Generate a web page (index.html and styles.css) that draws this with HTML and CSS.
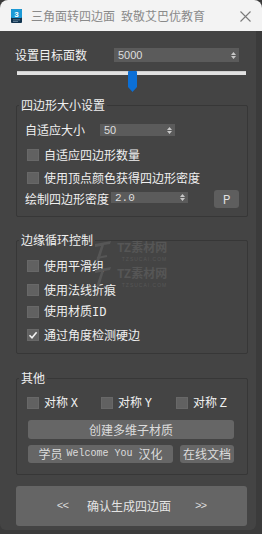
FILE: index.html
```html
<!DOCTYPE html>
<html lang="zh">
<head>
<meta charset="utf-8">
<title>三角面转四边面</title>
<link rel="stylesheet" href="styles.css">
</head>
<body>
<div class="window">
  <div class="titlebar">
    <svg class="app-icon" width="11" height="14" viewBox="0 0 11 14">
      <rect x="0" y="0" width="11" height="14" rx="1" fill="#12344f"/>
      <rect x="0" y="0" width="11" height="9" rx="1" fill="#1c9ad6"/>
      <rect x="2" y="10.5" width="7" height="0.8" fill="#6d8ba3"/>
      <rect x="2" y="12" width="5" height="0.8" fill="#6d8ba3"/>
      <text x="5.5" y="7.6" text-anchor="middle" font-family="Liberation Sans, sans-serif" font-weight="bold" font-size="8" fill="#ffffff">3</text>
    </svg>
    <span class="title">三角面转四边面<span class="title-gap"></span>致敬艾巴优教育</span>
    <svg class="close" width="11" height="11" viewBox="0 0 11 11">
      <path d="M0.5 0.5 L10.5 10.5 M10.5 0.5 L0.5 10.5" stroke="#7a7a7a" stroke-width="1.1" fill="none"/>
    </svg>
  </div>
  <div class="frame">
    <div class="main">
      <div class="row target">
        <span class="label target-label">设置目标面数</span>
        <div class="spinner spin-target"><span class="spin-val sans">5000</span><svg class="arrows" width="5" height="9" viewBox="0 0 5 9"><path d="M0 4 L2.5 1 L5 4 Z M0 5 L2.5 8 L5 5 Z" fill="#c8c8c8"/></svg></div>
      </div>
      <div class="slider">
        <div class="track"></div>
        <svg class="thumb" width="9" height="21" viewBox="0 0 9 21"><path d="M1 0 H8 A1 1 0 0 1 9 1 V16 L4.5 21 L0 16 V1 A1 1 0 0 1 1 0 Z" fill="#0b6fd6"/></svg>
      </div>

      <fieldset class="group g1">
        <legend>四边形大小设置</legend>
        <div class="row r-size">
          <span class="label size-label">自适应大小</span>
          <div class="spinner spin-size"><span class="spin-val sans">50</span><svg class="arrows" width="5" height="9" viewBox="0 0 5 9"><path d="M0 4 L2.5 1 L5 4 Z M0 5 L2.5 8 L5 5 Z" fill="#c8c8c8"/></svg></div>
        </div>
        <div class="check c1"><span class="box"></span><span class="label">自适应四边形数量</span></div>
        <div class="check c2"><span class="box"></span><span class="label">使用顶点颜色获得四边形密度</span></div>
        <div class="row r-density">
          <span class="label">绘制四边形密度</span>
          <div class="spinner spin-density"><span class="spin-val mono val-density">2.0</span><svg class="arrows" width="5" height="9" viewBox="0 0 5 9"><path d="M0 4 L2.5 1 L5 4 Z M0 5 L2.5 8 L5 5 Z" fill="#c8c8c8"/></svg></div>
          <button class="btn btn-p mono">P</button>
        </div>
      </fieldset>

      <fieldset class="group g2">
        <legend>边缘循环控制</legend>
        <div class="check e1"><span class="box"></span><span class="label">使用平滑组</span></div>
        <div class="check e2"><span class="box"></span><span class="label">使用法线折痕</span></div>
        <div class="check e3"><span class="box"></span><span class="label">使用材质<span class="mono big">ID</span></span></div>
        <div class="check e4"><span class="box checked"><svg width="12" height="12" viewBox="0 0 12 12"><path d="M2.5 6.2 L5 8.7 L9.6 3.2" stroke="#f2f2f2" stroke-width="1.6" fill="none"/></svg></span><span class="label">通过角度检测硬边</span></div>
      </fieldset>

      <fieldset class="group g3">
        <legend>其他</legend>
        <div class="sym-row">
          <div class="check"><span class="box"></span><span class="label">对称 <span class="mono big">X</span></span></div>
          <div class="check"><span class="box"></span><span class="label">对称 <span class="mono big">Y</span></span></div>
          <div class="check"><span class="box"></span><span class="label">对称 <span class="mono big">Z</span></span></div>
        </div>
        <button class="btn btn-wide">创建多维子材质</button>
        <div class="btn-row">
          <button class="btn btn-welcome">学员 <span class="mono">Welcome You</span> 汉化</button>
          <button class="btn btn-doc">在线文档</button>
        </div>
      </fieldset>

      <button class="btn go"><span class="chev mono">&lt;&lt;</span><span class="go-text">确认生成四边面</span><span class="chev mono">&gt;&gt;</span></button>

      <div class="watermark wm1">
        <svg class="wm-logo" width="20" height="22" viewBox="0 0 20 22"><path d="M2 4 L18 1 L17 4 L11 5 L6 21 L3 21 L8 6 L2 7 Z" fill="#565656"/><path d="M4 18 L14 16" stroke="#565656" stroke-width="2"/></svg>
        <div class="wm-text"><span class="wm-big">TZ素材网</span><span class="wm-small">TZSUCAI.COM</span></div>
      </div>
      <div class="watermark wm2">
        <svg class="wm-logo" width="20" height="22" viewBox="0 0 20 22"><path d="M2 4 L18 1 L17 4 L11 5 L6 21 L3 21 L8 6 L2 7 Z" fill="#565656"/></svg>
        <div class="wm-text"><span class="wm-big">TZ素材网</span><span class="wm-small">TZSUCAI.COM</span></div>
      </div>
    </div>
  </div>
</div>
</body>
</html>
```

FILE: styles.css
```css
html, body {
  margin: 0;
  padding: 0;
}
body {
  width: 262px;
  height: 534px;
  overflow: hidden;
  background: #3b3b3b;
  font-family: "Noto Sans CJK SC", "Liberation Sans", sans-serif;
  font-size: 12px;
  color: #efefef;
}
.window {
  width: 262px;
  height: 534px;
  display: flex;
  flex-direction: column;
}
.titlebar {
  height: 31px;
  flex: none;
  background: #f3f3f3;
  border-radius: 8px 8px 0 0;
  display: flex;
  align-items: center;
  padding-left: 11px;
}
.app-icon {
  display: block;
  margin-top: 1px;
}
.title {
  margin-left: 9px;
  color: #8a8a8a;
  font-size: 12px;
  line-height: 14px;
  white-space: nowrap;
  display: flex;
}
.title-gap {
  display: inline-block;
  width: 6px;
}
.close {
  display: block;
  margin-left: auto;
  margin-right: 11px;
  margin-top: 1px;
}
.frame {
  flex: 1;
  display: flex;
  background: #3b3b3b;
}
.main {
  position: relative;
  width: 256px;
  height: 499px;
  box-sizing: border-box;
  background: #444444;
  border-radius: 0 0 6px 6px;
  padding-left: 16px;
  padding-top: 17px;
}
.label {
  line-height: 14px;
  white-space: nowrap;
  color: #f0f0f0;
}
.mono {
  font-family: "Liberation Mono", monospace;
  font-size: 10px;
}
.mono.big {
  font-size: 12px;
}
.sans {
  font-family: "Liberation Sans", sans-serif;
  font-size: 11px;
}
.row {
  display: flex;
  align-items: center;
}
.target {
  height: 14px;
}
.target-label {
  width: 99px;
  margin-left: -1px;
}
.spinner {
  box-sizing: border-box;
  background: #5b5b5b;
  display: flex;
  align-items: center;
  padding: 0 3px 0 4px;
  color: #dedede;
}
.spin-val {
  flex: 1;
  line-height: 12px;
}
.val-density {
  font-size: 11px;
}
.arrows {
  display: block;
}
.spin-target {
  width: 125px;
  height: 14px;
}
.slider {
  position: relative;
  width: 229px;
  height: 21px;
  margin-left: 1px;
  margin-top: 6px;
}
.track {
  margin-top: 9px;
  height: 4px;
  background: #e2e2e2;
  border-top: 1px solid #cfcfcf;
  box-sizing: border-box;
}
.thumb {
  position: absolute;
  left: 111px;
  top: 0;
  display: block;
}
.group {
  margin: 0;
  padding: 0;
  width: 232px;
  box-sizing: border-box;
  border: 1px solid #373737;
  border-radius: 2px;
  min-inline-size: 0;
}
.group legend {
  margin-left: 2px;
  padding: 0 2px;
  line-height: 14px;
  font-size: 12px;
  color: #f0f0f0;
}
.g1 {
  margin-top: 6px;
  padding-bottom: 8px;
}
.g2 {
  margin-top: 16px;
  padding-bottom: 12px;
}
.g3 {
  margin-top: 17px;
  padding-bottom: 11px;
}
.r-size {
  height: 12px;
  margin-top: 12px;
  margin-left: 8px;
}
.size-label {
  width: 75px;
}
.spin-size {
  width: 75px;
  height: 12px;
}
.check {
  display: flex;
  align-items: center;
  height: 12px;
  gap: 5px;
}
.g1 .check, .g2 .check {
  margin-left: 10px;
}
.box {
  width: 12px;
  height: 12px;
  flex: none;
  box-sizing: border-box;
  background: #616161;
  border: 1px solid #686868;
  display: block;
  position: relative;
}
.box svg {
  position: absolute;
  left: -1px;
  top: -1px;
}
.c1 { margin-top: 13px; }
.c2 { margin-top: 11px; }
.r-density {
  height: 18px;
  margin-top: 6px;
  margin-left: 8px;
}
.spin-density {
  width: 77px;
  height: 11px;
  margin-left: 2px;
  margin-top: -3px;
}
.btn {
  font-family: "Noto Sans CJK SC", "Liberation Sans", sans-serif;
  font-size: 12px;
  color: #dcdcdc;
  background: #666666;
  border: none;
  border-radius: 3px;
  padding: 0;
  margin: 0;
  line-height: 14px;
  display: flex;
  align-items: center;
  justify-content: center;
  white-space: nowrap;
}
.btn-p {
  width: 25px;
  height: 18px;
  margin-left: 26px;
  font-size: 12px;
  color: #e0e0e0;
  background: #5e5e5e;
}
.e1 { margin-top: 13px; }
.e2 { margin-top: 12px; }
.e3 { margin-top: 10px; }
.e4 { margin-top: 11px; }
.sym-row {
  display: grid;
  grid-template-columns: 74px 75px auto;
  margin-top: 12px;
  margin-left: 10px;
}
.btn-wide {
  width: 206px;
  height: 19px;
  margin-top: 11px;
  margin-left: 11px;
}
.btn-row {
  display: flex;
  gap: 7px;
  margin-top: 6px;
  margin-left: 11px;
}
.btn-welcome {
  width: 145px;
  height: 18px;
  gap: 0;
}
.btn-welcome .mono {
  margin: 0 6px 0 4px;
  font-size: 10px;
}
.btn-doc {
  width: 54px;
  height: 18px;
}
.go {
  width: 231px;
  height: 40px;
  margin-top: 11px;
  background: #656565;
  color: #e4e4e4;
}
.chev {
  font-size: 11px;
  letter-spacing: -1px;
  color: #dddddd;
}
.go-text {
  margin: 0 24px 0 19px;
}
.watermark {
  position: absolute;
  display: flex;
  align-items: flex-start;
  gap: 4px;
  pointer-events: none;
}
.wm1 { left: 93px; top: 209px; }
.wm2 { left: 93px; top: 235px; }
.wm-logo { display: block; }
.wm-text {
  display: flex;
  flex-direction: column;
  align-items: flex-end;
}
.wm-big {
  font-family: "Noto Sans CJK SC", sans-serif;
  font-weight: bold;
  font-size: 12px;
  line-height: 14px;
  color: #565656;
}
.wm-small {
  font-family: "Liberation Sans", sans-serif;
  font-size: 5px;
  line-height: 6px;
  letter-spacing: 1px;
  color: #575757;
  margin-top: 2px;
}
```
